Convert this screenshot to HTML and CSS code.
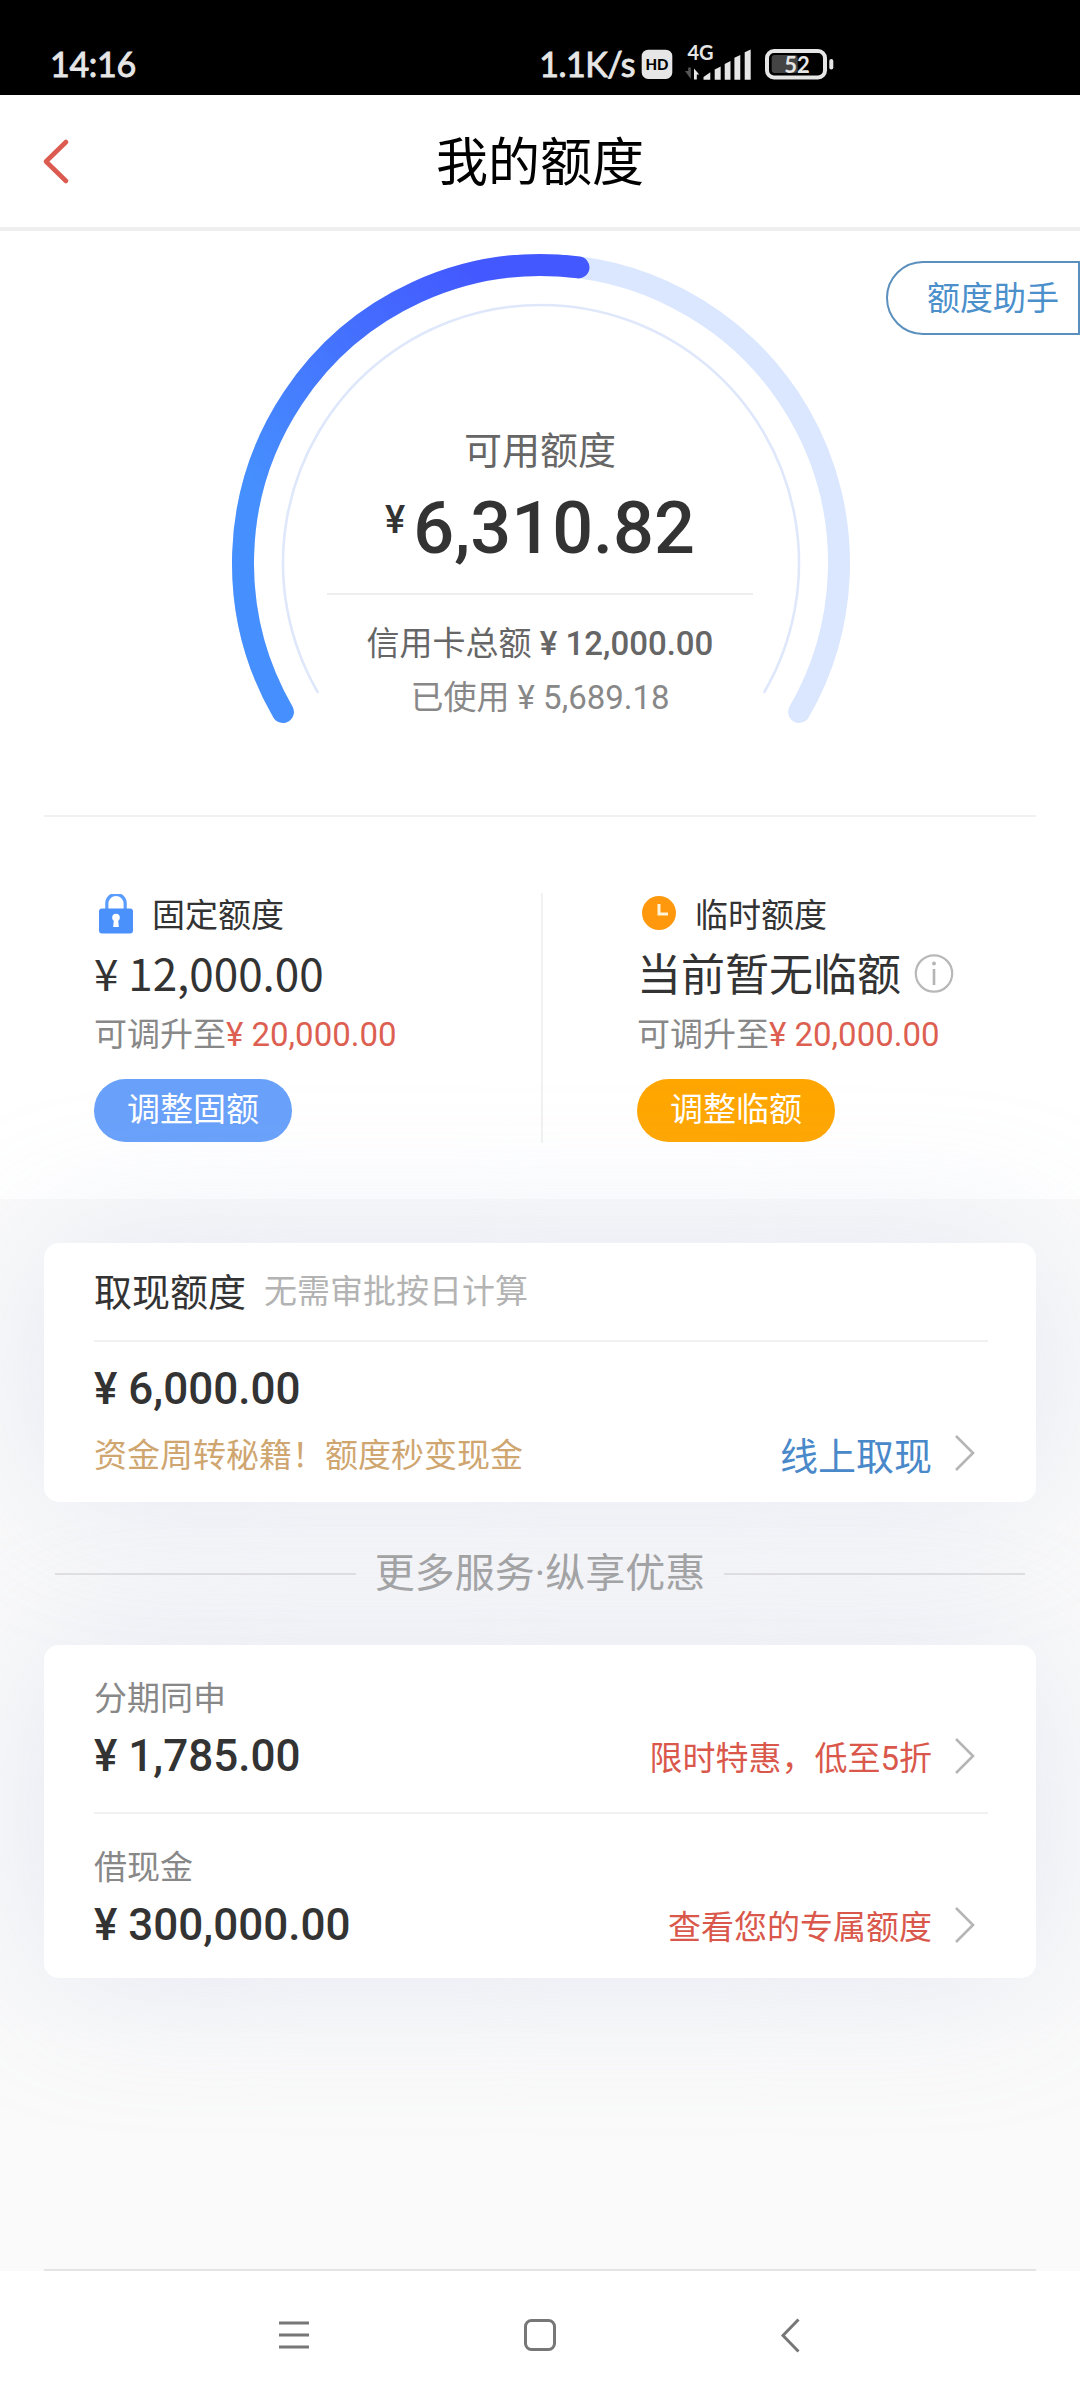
FILE: index.html
```html
<!DOCTYPE html>
<html lang="zh-CN">
<head>
<meta charset="utf-8">
<title>我的额度</title>
<link rel="stylesheet" href="styles.css">
</head>
<body>
<div class="statusbar">
  <span class="clock">14:16</span>
  <div class="status-right">
    <span class="speed">1.1K/s</span>
    <svg class="status-icons" width="196" height="56" viewBox="640 34 196 56">
      <rect x="641.7" y="49.7" width="30.6" height="29.3" rx="6.5" fill="#e6e6e6"/>
      <text class="hd" x="657" y="70" text-anchor="middle">HD</text>
      <text class="net" x="687.5" y="60">4G</text>
      <path d="M685 71h3.2v-3.5h2.6v11.5z" fill="#555"/>
      <path d="M694 79.5V68.5l5.2 6h-2.4v5z" fill="#e6e6e6"/>
      <g fill="#e6e6e6">
        <path d="M703.5 79.7v-2.7l6.8-4.7v7.4z"/>
        <path d="M714.7 79.7V69.5l6-3v13.200z"/>
        <path d="M724.7 79.7V64l5.800-3v18.700z"/>
        <path d="M734.400 79.7V57.800l5.900-2.900v24.800z"/>
        <path d="M744.7 79.7V52.3l6-2.900v30.300z"/>
      </g>
      <rect x="771.7" y="55" width="26" height="18" rx="3" fill="#444"/>
      <rect x="767" y="51" width="58" height="26.500" rx="7" fill="none" stroke="#e6e6e6" stroke-width="4"/>
      <rect x="829.300" y="59" width="4" height="10.500" rx="2" fill="#e6e6e6"/>
      <text class="bat" x="797" y="73" text-anchor="middle">52</text>
    </svg>
  </div>
</div>

<header class="header">
  <svg class="back" width="32" height="52" viewBox="0 0 32 52"><path d="M26 7 6 26.500 26 46" fill="none" stroke="#dc5b50" stroke-width="4.600" stroke-linecap="round" stroke-linejoin="round"/></svg>
  <h1>我的额度</h1>
</header>

<main>
  <section class="gauge">
    <svg class="dial" width="1080" height="584" viewBox="0 231 1080 584">
      <defs>
        <linearGradient id="g" gradientUnits="userSpaceOnUse" x1="250" y1="480" x2="470" y2="265">
          <stop offset="0" stop-color="#468ffe"/><stop offset="1" stop-color="#4358ff"/>
        </linearGradient>
      </defs>
      <g fill="none" stroke-linecap="round">
        <path d="M282.900 712A298 298 0 1 1 799.100 712" stroke="#dbe7ff" stroke-width="22"/>
        <path d="M282.900 712A298 298 0 0 1 578.500 267.400" stroke="url(#g)" stroke-width="22"/>
        <path d="M317.600 692A258 258 0 1 1 764.400 692" stroke="#dfe8fb" stroke-width="2.600"/>
      </g>
    </svg>
    <div class="readout">
      <div class="caption">可用额度</div>
      <div class="available"><span class="yen">¥</span>6,310.82</div>
      <div class="total">信用卡总额 <b>¥ 12,000.00</b></div>
      <div class="used">已使用 ¥ 5,689.18</div>
    </div>
    <a class="helper">额度助手</a>
  </section>

  <section class="limits">
    <div class="limit fixed">
      <div class="label">
        <svg width="44" height="44" viewBox="0 0 44 44"><path d="M12.800 16V9.500a9.200 9.200 0 0 1 18.400 0V16" fill="none" stroke="#5b9cff" stroke-width="3.200"/><rect x="5" y="14.500" width="34" height="25" rx="3" fill="#4a91fc"/><circle cx="22" cy="23.500" r="3.800" fill="#fff"/><path d="M20 24h4l.8 9h-5.600z" fill="#fff"/></svg>
        固定额度
      </div>
      <div class="value">¥ 12,000.00</div>
      <div class="raise">可调升至<em>¥ 20,000.00</em></div>
      <a class="pill blue">调整固额</a>
    </div>
    <div class="limit temp">
      <div class="label">
        <svg width="44" height="44" viewBox="0 0 44 44"><circle cx="22" cy="19" r="17" fill="#ff980d"/><path d="M22 10v10h9" fill="none" stroke="#fff3d8" stroke-width="3"/></svg>
        临时额度
      </div>
      <div class="value">当前暂无临额
        <svg width="40" height="42" viewBox="0 0 40 42"><circle cx="20" cy="20.500" r="18.200" fill="none" stroke="#b8b8b8" stroke-width="2.200"/><path d="M20 16v16" stroke="#b4b4b4" stroke-width="2.600"/><circle cx="20" cy="10.500" r="1.900" fill="#b4b4b4"/></svg>
      </div>
      <div class="raise">可调升至<em>¥ 20,000.00</em></div>
      <a class="pill orange">调整临额</a>
    </div>
  </section>

  <section class="services">
    <article class="card">
      <div class="card-head"><h2>取现额度</h2><span>无需审批按日计算</span></div>
      <div class="money cash">¥ 6,000.00</div>
      <div class="row cash-row">
        <span class="tip">资金周转秘籍！额度秒变现金</span>
        <a class="link">线上取现<svg class="chev" width="24" height="40" viewBox="0 0 24 40"><path d="M3 3 20 20 3 37"/></svg></a>
      </div>
    </article>

    <div class="more"><span>更多服务·纵享优惠</span></div>

    <article class="card">
      <div class="offer">
        <div class="name">分期同申</div>
        <div class="row">
          <span class="money">¥ 1,785.00</span>
          <a class="promo">限时特惠，低至5折<svg class="chev" width="24" height="40" viewBox="0 0 24 40"><path d="M3 3 20 20 3 37"/></svg></a>
        </div>
      </div>
      <div class="offer">
        <div class="name">借现金</div>
        <div class="row">
          <span class="money">¥ 300,000.00</span>
          <a class="promo">查看您的专属额度<svg class="chev" width="24" height="40" viewBox="0 0 24 40"><path d="M3 3 20 20 3 37"/></svg></a>
        </div>
      </div>
    </article>
    <hr class="end">
  </section>
</main>

<nav class="navbar">
  <svg width="40" height="40" viewBox="0 0 40 40"><path d="M5 8h30M5 20h30M5 32h30"/></svg>
  <svg width="40" height="40" viewBox="0 0 40 40"><rect x="5.500" y="5.500" width="29" height="29" rx="6"/></svg>
  <svg width="40" height="40" viewBox="0 0 40 40"><path d="M32.500 4.500 17 20.500 32.500 36.500"/></svg>
</nav>
</body>
</html>
```
FILE: styles.css
```css
* { box-sizing: border-box; margin: 0; padding: 0; }

body {
  width: 1080px;
  height: 2400px;
  overflow: hidden;
  display: flex;
  flex-direction: column;
  background: #fff;
  color: #333;
  font-family: Roboto, "Noto Sans CJK SC", sans-serif;
  font-size: 33px;
  font-weight: 400;
  white-space: nowrap;
}

svg { display: block; flex: none; }

/* status bar */
.statusbar {
  height: 95px;
  flex: none;
  display: flex;
  justify-content: space-between;
  align-items: flex-start;
  padding: 34px 244px 0 50px;
  background: #000;
  color: #e6e6e6;
  font-family: Lato, sans-serif;
  font-size: 34px;
  line-height: 59px;
}
.clock, .speed { -webkit-text-stroke: .9px #e6e6e6; }
.clock { letter-spacing: -.3px; }
.status-right { display: flex; }
.speed { margin-right: 5px; letter-spacing: -.5px; }
.status-icons text { font-family: Lato, sans-serif; font-weight: 700; fill: #e6e6e6; }
.status-icons .hd { font-size: 15px; font-weight: 900; fill: #000; }
.status-icons .net { font-size: 20px; }
.status-icons .bat { font-size: 22px; }

/* page header */
.header {
  height: 136px;
  flex: none;
  display: grid;
  grid-template-columns: 120px 1fr 120px;
  align-items: center;
  border-bottom: 4px solid #efefef;
}
.back { margin-left: 40px; }
h1 {
  padding-top: 6px;
  color: #000;
  font-size: 52px;
  font-weight: 400;
  line-height: 70px;
  text-align: center;
}

/* gauge */
.gauge {
  position: relative;
  height: 584px;
  display: grid;
}
.dial, .readout { grid-area: 1 / 1; }
.readout {
  width: 426px;
  margin-left: 327px;
  padding-top: 195px;
  display: flex;
  flex-direction: column;
  align-items: center;
}
.caption { color: #666; font-size: 38px; line-height: 50px; }
.available {
  align-self: stretch;
  height: 108px;
  padding-top: 13px;
  border-bottom: 2px solid #eee;
  font-size: 72px;
  font-weight: 500;
  line-height: 80px;
  text-align: center;
}
.available { height: 119px; }
.yen { margin-right: 8px; font-size: 38px; line-height: 1; vertical-align: 20px; }
.total { margin-top: 26px; color: #666; line-height: 46px; }
.total b { font-weight: 500; }
.used { margin-top: 8px; color: #888; line-height: 46px; }
.helper {
  position: absolute;
  top: 30px;
  right: 0;
  width: 194px;
  height: 74px;
  padding-left: 39px;
  border: 2px solid #5b8fbd;
  border-radius: 37px 0 0 37px;
  color: #4b8fcb;
  line-height: 72px;
}

/* fixed and temporary limits */
.limits {
  height: 384px;
  margin: 0 44px;
  padding-top: 76px;
  border-top: 2px solid #f0f0f0;
  display: flex;
  align-items: flex-start;
}
.limit { height: 250px; padding-top: 1px; }
.fixed { width: 499px; padding-left: 50px; border-right: 2px solid #f1f1f1; }
.temp { padding-left: 94px; }
.label { display: flex; gap: 14px; line-height: 44px; }
.value {
  display: flex;
  gap: 13px;
  margin-top: 9px;
  font-family: "Noto Sans CJK SC", sans-serif;
  font-size: 44px;
  line-height: 50px;
}
.value svg { margin-top: 6px; }
.raise { margin-top: 18px; color: #888; line-height: 40px; }
.raise em { color: #dd5f52; font-style: normal; }
.pill {
  display: block;
  width: 198px;
  height: 63px;
  margin-top: 24px;
  border-radius: 32px;
  color: #fff;
  line-height: 62px;
  text-align: center;
}
.blue { background: #69a1fa; }
.orange { background: #ffa600; }

/* cards */
.services {
  height: 1072px;
  padding: 44px 44px 0;
  display: flex;
  flex-direction: column;
  background: #fafafa;
}
.card {
  padding: 0 48px 0 50px;
  border-radius: 15px;
  background: #fff;
  box-shadow: 0 0 150px rgba(180, 190, 226, .31);
}
.card-head {
  height: 99px;
  padding-bottom: 5px;
  border-bottom: 2px solid #f1f1f1;
  display: flex;
  align-items: center;
  gap: 18px;
}
h2 { font-size: 38px; font-weight: 400; }
.card-head span { color: #b3b3b3; }
.money { font-size: 44px; font-weight: 500; line-height: 50px; }
.cash { padding-top: 22px; }
.row { display: flex; justify-content: space-between; align-items: center; }
.cash-row { height: 88px; padding-bottom: 10px; }
.tip { color: #cfa670; }
.link, .promo { display: flex; align-items: center; gap: 21px; padding-right: 11px; }
.link { color: #4988c9; font-size: 38px; }
.promo { color: #d9584b; }
.chev path { fill: none; stroke: #b5b5b5; stroke-width: 2.6; }

.more {
  height: 143px;
  padding: 0 11px;
  display: flex;
  align-items: center;
  gap: 19px;
  color: #a2a2a2;
  font-size: 40px;
  line-height: 50px;
}
.more::before, .more::after { content: ""; flex: 1; height: 2px; background: #e0e0e2; }

.offer { height: 164px; padding-top: 34px; }
.offer:first-child { height: 169px; border-bottom: 2px solid #f1f1f1; }
.name { color: #888; line-height: 40px; }
.offer .row { margin-top: 12px; }

/* closing hairline above the system bar */
.end { margin-top: auto; border: 0; height: 2px; background: #e4e4e4; }

/* system navigation */
.navbar {
  flex: 1;
  display: flex;
  justify-content: center;
  gap: 206px;
  padding-top: 44px;
  background: #fff;
}
.navbar path, .navbar rect { fill: none; stroke: #777; stroke-width: 3; }
```
